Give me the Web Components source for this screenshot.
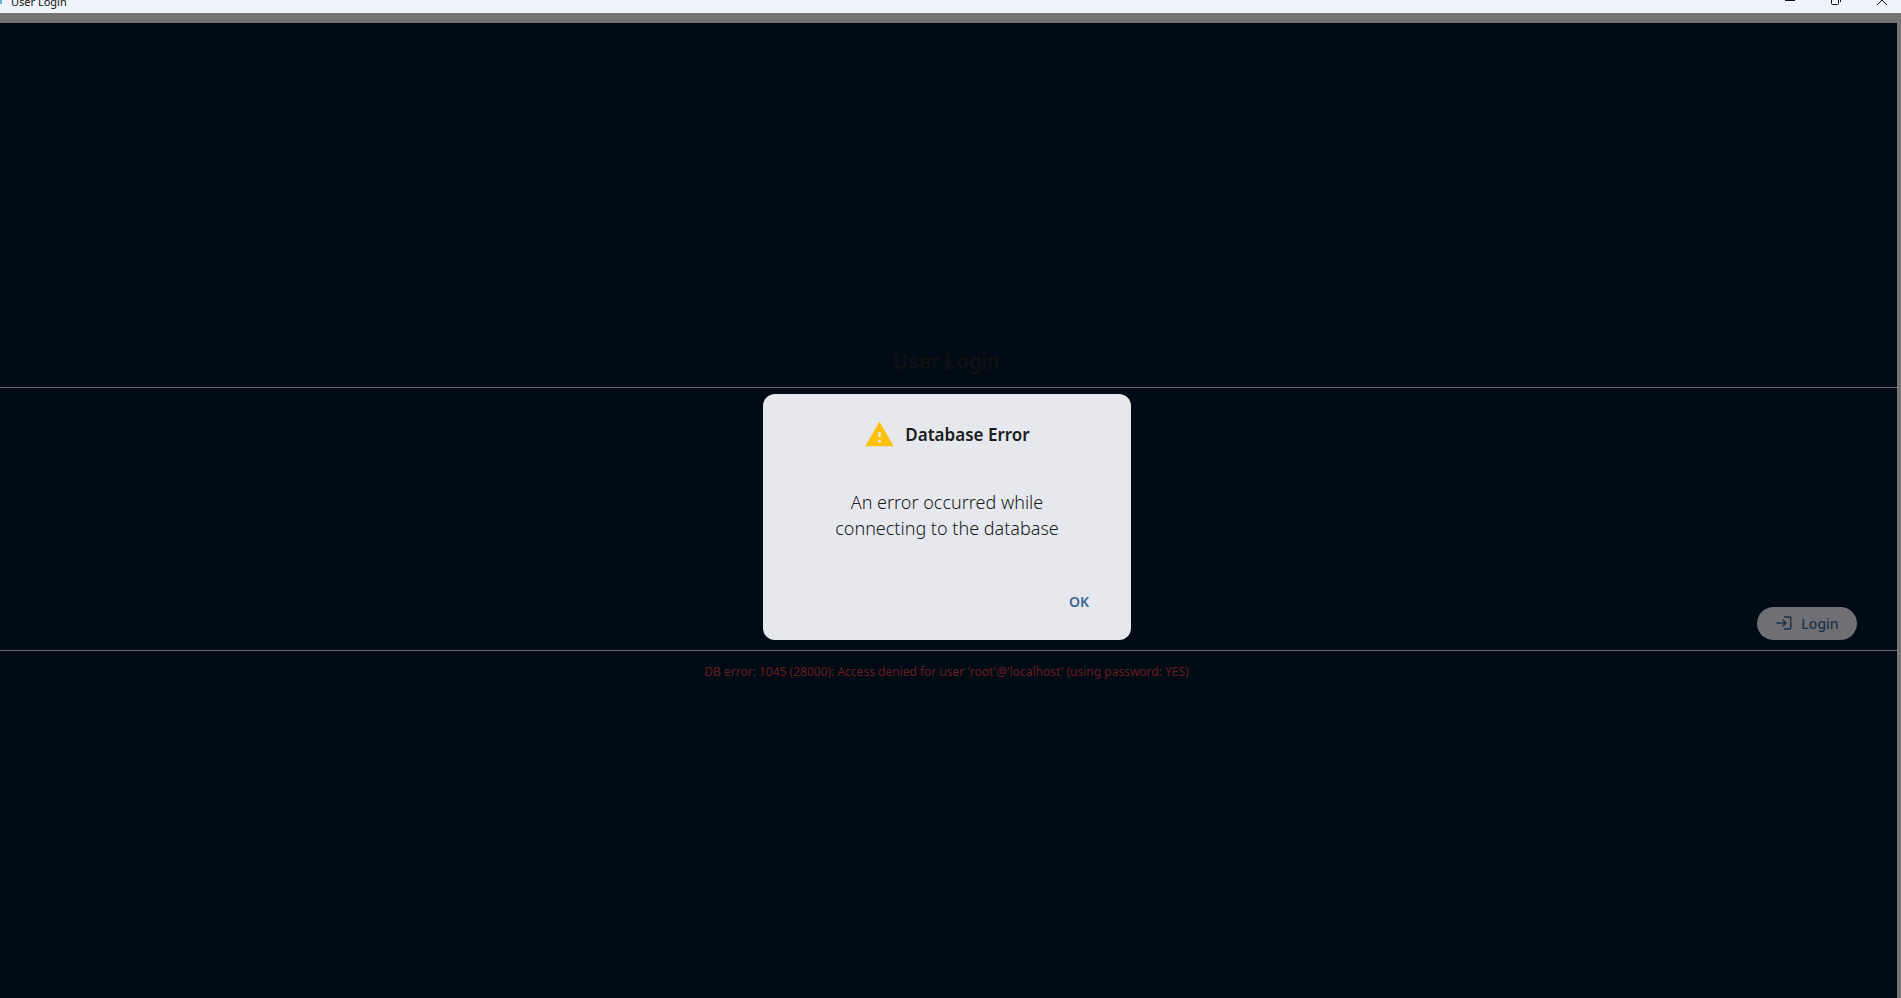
<!DOCTYPE html>
<html lang="en">
<head>
<meta charset="utf-8">
<title>User Login</title>
<style>
html, body { height: 100%; margin: 0; }
body { overflow: hidden; background: #757575; font-family: "Noto Sans", "Open Sans", sans-serif; }
</style>
</head>
<body>
<app-window>
  <title-bar slot="bar">User Login</title-bar>
  <login-page>
    <span slot="title">User Login</span>
    <pill-button slot="action">Login</pill-button>
    <span slot="status">DB error: 1045 (28000): Access denied for user 'root'@'localhost' (using password: YES)</span>
  </login-page>
  <alert-dialog slot="dialog">
    <span slot="title">Database Error</span>
    An error occurred while<br>connecting to the database
  </alert-dialog>
</app-window>
<script>
const define = (name, html) => customElements.define(name, class extends HTMLElement {
  constructor() {
    super();
    this.attachShadow({ mode: "open" }).innerHTML = html;
  }
});

define("app-window", `
<style>
:host { display: flex; flex-direction: column; height: 100vh; }
main { flex: 1; display: flex; position: relative; margin: 10px 4px 0 0; background: #000b16; }
</style>
<slot name="bar"></slot>
<main><slot></slot><slot name="dialog"></slot></main>`);

define("title-bar", `
<style>
:host { display: flex; align-items: flex-end; height: 13px; overflow: hidden; background: #eff3fb; color: #111; font-size: 11px; }
header { flex: 1; display: flex; align-items: center; height: 24px; margin-right: -4px; }
.logo { width: 2px; height: 6px; margin-right: 9px; background: #55b8ea; }
.title { flex: 1; padding-top: 2px; line-height: 22px; }
button { width: 46px; height: 24px; padding: 0; border: 0; background: none; display: grid; place-items: center; }
svg { display: block; fill: none; stroke: #111; }
</style>
<header>
  <span class="logo"></span>
  <span class="title"><slot></slot></span>
  <button aria-label="Minimize"><svg width="12" height="12"><path d="M1 5.500h10"/></svg></button>
  <button aria-label="Restore"><svg width="12" height="12"><rect x="1.500" y="2.500" width="7" height="7" rx="1"/><path d="M4 .5h4.500q2 0 2 2V7"/></svg></button>
  <button aria-label="Close"><svg width="12" height="12"><path d="M1 0l10 10M11 0L1 10"/></svg></button>
</header>`);

define("login-page", `
<style>
:host { flex: 1; display: flex; flex-direction: column; justify-content: center; padding-top: 8px; }
h1 { margin: 0 4px 9px 0; text-align: center; font: 700 22px/32px Roboto, sans-serif; color: #0f1113; }
section { height: 264px; border: solid #66686b; border-width: 1px 0; display: flex; align-items: flex-end; justify-content: flex-end; padding: 0 40px 10px 0; box-sizing: border-box; }
p { margin: 9px 4px 0 0; text-align: center; font-size: 12px; line-height: 24px; color: #6b1d1d; }
</style>
<h1><slot name="title"></slot></h1>
<section><slot name="action"></slot></section>
<p><slot name="status"></slot></p>`);

define("pill-button", `
<style>
:host { display: block; }
button { display: flex; align-items: center; justify-content: center; gap: 8px; width: 100px; height: 33px; padding: 0; border: 0; border-radius: 17px; background: #6f6f74; color: #1d3349; font: 500 14px/20px "Noto Sans", sans-serif; }
svg { display: block; fill: currentColor; }
span { padding-top: 2px; }
</style>
<button>
  <svg width="18" height="18" viewBox="0 0 24 24"><path d="M11 7 9.600 8.400l2.600 2.600H2v2h10.200l-2.600 2.600L11 17l5-5-5-5zm9 12h-8v2h8c1.100 0 2-.9 2-2V5c0-1.100-.9-2-2-2h-8v2h8v14z"/></svg>
  <span><slot></slot></span>
</button>`);

define("alert-dialog", `
<style>
:host { position: absolute; inset: 0; display: flex; align-items: center; justify-content: center; padding: 13px 3px 0 0; }
[role=alertdialog] { box-sizing: border-box; width: 368px; padding: 23px 24px 19px; border-radius: 12px; background: #e6e8ed; color: #191c20; }
h2 { display: flex; align-items: center; justify-content: center; gap: 10px; margin: 0; font-size: 17px; line-height: 32px; font-weight: 600; }
h2 slot { display: block; padding-top: 2px; }
svg { display: block; }
p { margin: 38px 0 42px; text-align: center; font-size: 18px; line-height: 26px; font-weight: 300; }
footer { display: flex; justify-content: flex-end; }
button { width: 56px; height: 38px; padding: 0; border: 0; background: none; color: #3b6796; font: 600 14px/20px "Noto Sans", sans-serif; }
</style>
<div role="alertdialog" aria-labelledby="t">
  <h2 id="t"><svg width="31" height="31" viewBox="0 0 24 24" fill="#ffc107"><path d="M1 21h22L12 2 1 21zm12-3h-2v-2h2v2zm0-4h-2v-4h2v4z"/></svg><slot name="title"></slot></h2>
  <p><slot></slot></p>
  <footer><button>OK</button></footer>
</div>`);
</script>
</body>
</html>
